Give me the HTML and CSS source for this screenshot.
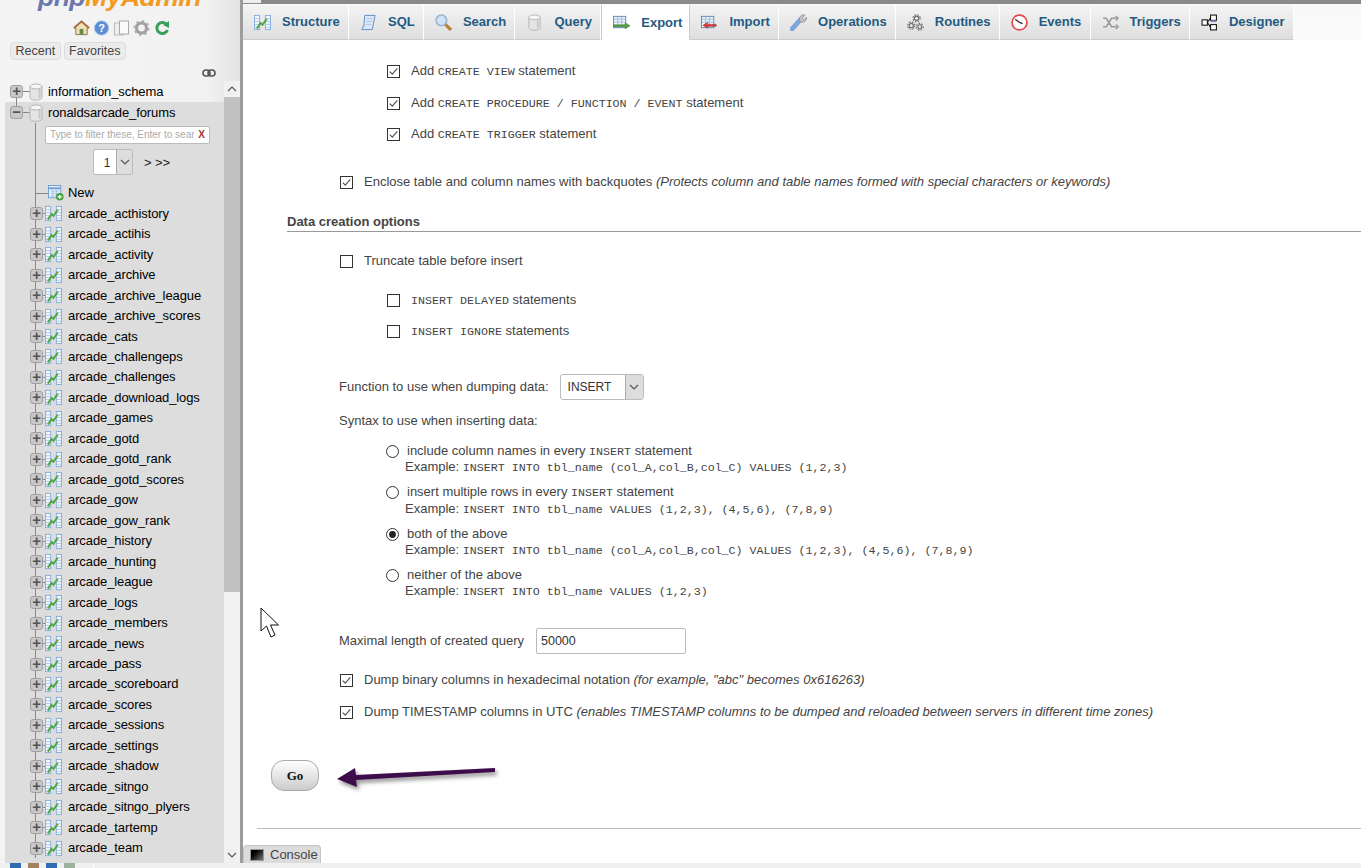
FILE: index.html
```html
<!DOCTYPE html>
<html lang="en">
<head>
<meta charset="utf-8">
<title>phpMyAdmin Export</title>
<link rel="stylesheet" href="styles.css">
</head>
<body>
<svg class="defs" width="0" height="0" aria-hidden="true">
  <defs>
    <symbol id="tbl" viewBox="0 0 18 18">
      <rect x="0.5" y="1.5" width="5.5" height="15" fill="#f3f8fe" stroke="#86aedd"/>
      <rect x="12" y="1.5" width="5.5" height="15" fill="#f3f8fe" stroke="#86aedd"/>
      <path d="M1 5h4.5M1 8h4.5M1 11h4.5M1 14h4.5M12.500 5h4.500M12.500 8h4.500M12.500 11h4.500M12.500 14h4.500" stroke="#a9c6e8"/>
      <path d="M3 15.500 L7 9.500 L9 11.500 L13.500 5" fill="none" stroke="#4ea53f" stroke-width="2"/>
    </symbol>
    <symbol id="db" viewBox="0 0 14 18">
      <path d="M1 3.500v11c0 1.500 2.600 2.700 6 2.700s6-1.200 6-2.700v-11z" fill="#e4e4e4" stroke="#b5b5b5"/>
      <ellipse cx="7" cy="3.500" rx="6" ry="2.500" fill="#f7f7f7" stroke="#b5b5b5"/>
      <rect x="9.500" y="6" width="2" height="9" fill="#c9c9c9"/>
    </symbol>
    <symbol id="newt" viewBox="0 0 17 17">
      <rect x="0.5" y="0.5" width="13" height="13" fill="#e8f0fa" stroke="#6f9bd1"/>
      <path d="M1 3.500h12" stroke="#6f9bd1" stroke-width="2"/>
      <path d="M3 6.500h9M3 9h9M3 11.500h9M5 5v8M9 5v8" stroke="#a9c4e4"/>
      <circle cx="12.500" cy="12.500" r="4" fill="#46a23c"/>
      <path d="M10.500 12.500h4M12.500 10.500v4" stroke="#fff" stroke-width="1.400"/>
    </symbol>
    <symbol id="chk" viewBox="0 0 13 13">
      <rect x="0.5" y="0.5" width="12" height="12" fill="#fff" stroke="#333"/>
      <path d="M2.800 6.600 L5.300 9.200 L10.300 3.400" fill="none" stroke="#555" stroke-width="1.200"/>
    </symbol>
    <symbol id="unchk" viewBox="0 0 13 13">
      <rect x="0.5" y="0.5" width="12" height="12" fill="#fff" stroke="#333"/>
    </symbol>
    <symbol id="rad" viewBox="0 0 13 13">
      <circle cx="6.500" cy="6.500" r="6" fill="#fff" stroke="#333"/>
    </symbol>
    <symbol id="radon" viewBox="0 0 13 13">
      <circle cx="6.500" cy="6.500" r="6" fill="#fff" stroke="#333"/>
      <circle cx="6.500" cy="6.500" r="3.400" fill="#222"/>
    </symbol>
    <symbol id="chev" viewBox="0 0 10 6">
      <path d="M1 1 L5 5 L9 1" fill="none" stroke="#555" stroke-width="1.200"/>
    </symbol>
  </defs>
</svg>

<div class="app">
  <aside class="side">
    <div class="logo"><span class="logo-text"><span class="logo-php">php</span><span class="logo-my">MyAdmin</span></span></div>
    <div class="quick">
      <svg class="qi" viewBox="0 0 18 16"><path d="M1 8 L9 1 L17 8 L15 8 L15 15 L3 15 L3 8 Z" fill="#efe0b8" stroke="#7c7a4a"/><path d="M1 8 L9 1 L17 8" fill="none" stroke="#a86a3a" stroke-width="2"/><rect x="7" y="9" width="4" height="6" fill="#6b8a4a"/></svg>
      <svg class="qi" viewBox="0 0 16 16"><circle cx="8" cy="8" r="7.200" fill="#5b8fd2" stroke="#b6cde9"/><text class="qi-help" x="8" y="12" text-anchor="middle">?</text></svg>
      <svg class="qi" viewBox="0 0 16 16"><rect x="1" y="3" width="9" height="12" fill="#eee" stroke="#bbb"/><rect x="6" y="1" width="9" height="13" fill="#fafafa" stroke="#aaa"/></svg>
      <svg class="qi" viewBox="0 0 16 16"><circle cx="8" cy="8" r="5" fill="none" stroke="#a2a2a2" stroke-width="3.200"/><circle cx="8" cy="8" r="7" fill="none" stroke="#adadad" stroke-width="2" stroke-dasharray="2.400 3.100"/></svg>
      <svg class="qi qi-sm" viewBox="0 0 14 16"><path d="M12 5 A5.500 5.500 0 1 0 12.500 10" fill="none" stroke="#3aa05a" stroke-width="3"/><path d="M8 5 L14 1 L14 8 Z" fill="#3aa05a"/></svg>
    </div>
    <div class="side-tabs">
      <span class="side-btn">Recent</span>
      <span class="side-btn">Favorites</span>
    </div>
    <div class="linkrow">
      <svg class="link-ico" viewBox="0 0 14 8"><rect x="1" y="1" width="7" height="6" rx="3" fill="none" stroke="#555" stroke-width="1.600"/><rect x="6" y="1" width="7" height="6" rx="3" fill="none" stroke="#555" stroke-width="1.600"/></svg>
    </div>
    <div class="nav">
      <div class="tree">
        <div class="db-row db-row-first">
          <span class="exp">+</span><span class="conn"></span><svg class="db-ico"><use href="#db"/></svg><span>information_schema</span>
        </div>
        <div class="db-open">
          <div class="db-row db-row-open">
            <span class="exp">&minus;</span><span class="conn"></span><svg class="db-ico"><use href="#db"/></svg><span>ronaldsarcade_forums</span>
          </div>
          <div class="kids">
            <div class="filter"><span class="filter-ph">Type to filter these, Enter to search all</span><span class="filter-x">X</span></div>
            <div class="pager">
              <span class="pg-sel"><span class="pg-val">1</span><span class="pg-btn"><svg class="chev"><use href="#chev"/></svg></span></span>
              <span class="pg-next">&gt; &gt;&gt;</span>
            </div>
            <div class="row row-new"><span class="conn-new"></span><svg class="new-ico"><use href="#newt"/></svg><span>New</span></div>
            <div class="row"><span class="exp">+</span><span class="conn-s"></span><svg class="t-ico"><use href="#tbl"/></svg><span>arcade_acthistory</span></div>
            <div class="row"><span class="exp">+</span><span class="conn-s"></span><svg class="t-ico"><use href="#tbl"/></svg><span>arcade_actihis</span></div>
            <div class="row"><span class="exp">+</span><span class="conn-s"></span><svg class="t-ico"><use href="#tbl"/></svg><span>arcade_activity</span></div>
            <div class="row"><span class="exp">+</span><span class="conn-s"></span><svg class="t-ico"><use href="#tbl"/></svg><span>arcade_archive</span></div>
            <div class="row"><span class="exp">+</span><span class="conn-s"></span><svg class="t-ico"><use href="#tbl"/></svg><span>arcade_archive_league</span></div>
            <div class="row"><span class="exp">+</span><span class="conn-s"></span><svg class="t-ico"><use href="#tbl"/></svg><span>arcade_archive_scores</span></div>
            <div class="row"><span class="exp">+</span><span class="conn-s"></span><svg class="t-ico"><use href="#tbl"/></svg><span>arcade_cats</span></div>
            <div class="row"><span class="exp">+</span><span class="conn-s"></span><svg class="t-ico"><use href="#tbl"/></svg><span>arcade_challengeps</span></div>
            <div class="row"><span class="exp">+</span><span class="conn-s"></span><svg class="t-ico"><use href="#tbl"/></svg><span>arcade_challenges</span></div>
            <div class="row"><span class="exp">+</span><span class="conn-s"></span><svg class="t-ico"><use href="#tbl"/></svg><span>arcade_download_logs</span></div>
            <div class="row"><span class="exp">+</span><span class="conn-s"></span><svg class="t-ico"><use href="#tbl"/></svg><span>arcade_games</span></div>
            <div class="row"><span class="exp">+</span><span class="conn-s"></span><svg class="t-ico"><use href="#tbl"/></svg><span>arcade_gotd</span></div>
            <div class="row"><span class="exp">+</span><span class="conn-s"></span><svg class="t-ico"><use href="#tbl"/></svg><span>arcade_gotd_rank</span></div>
            <div class="row"><span class="exp">+</span><span class="conn-s"></span><svg class="t-ico"><use href="#tbl"/></svg><span>arcade_gotd_scores</span></div>
            <div class="row"><span class="exp">+</span><span class="conn-s"></span><svg class="t-ico"><use href="#tbl"/></svg><span>arcade_gow</span></div>
            <div class="row"><span class="exp">+</span><span class="conn-s"></span><svg class="t-ico"><use href="#tbl"/></svg><span>arcade_gow_rank</span></div>
            <div class="row"><span class="exp">+</span><span class="conn-s"></span><svg class="t-ico"><use href="#tbl"/></svg><span>arcade_history</span></div>
            <div class="row"><span class="exp">+</span><span class="conn-s"></span><svg class="t-ico"><use href="#tbl"/></svg><span>arcade_hunting</span></div>
            <div class="row"><span class="exp">+</span><span class="conn-s"></span><svg class="t-ico"><use href="#tbl"/></svg><span>arcade_league</span></div>
            <div class="row"><span class="exp">+</span><span class="conn-s"></span><svg class="t-ico"><use href="#tbl"/></svg><span>arcade_logs</span></div>
            <div class="row"><span class="exp">+</span><span class="conn-s"></span><svg class="t-ico"><use href="#tbl"/></svg><span>arcade_members</span></div>
            <div class="row"><span class="exp">+</span><span class="conn-s"></span><svg class="t-ico"><use href="#tbl"/></svg><span>arcade_news</span></div>
            <div class="row"><span class="exp">+</span><span class="conn-s"></span><svg class="t-ico"><use href="#tbl"/></svg><span>arcade_pass</span></div>
            <div class="row"><span class="exp">+</span><span class="conn-s"></span><svg class="t-ico"><use href="#tbl"/></svg><span>arcade_scoreboard</span></div>
            <div class="row"><span class="exp">+</span><span class="conn-s"></span><svg class="t-ico"><use href="#tbl"/></svg><span>arcade_scores</span></div>
            <div class="row"><span class="exp">+</span><span class="conn-s"></span><svg class="t-ico"><use href="#tbl"/></svg><span>arcade_sessions</span></div>
            <div class="row"><span class="exp">+</span><span class="conn-s"></span><svg class="t-ico"><use href="#tbl"/></svg><span>arcade_settings</span></div>
            <div class="row"><span class="exp">+</span><span class="conn-s"></span><svg class="t-ico"><use href="#tbl"/></svg><span>arcade_shadow</span></div>
            <div class="row"><span class="exp">+</span><span class="conn-s"></span><svg class="t-ico"><use href="#tbl"/></svg><span>arcade_sitngo</span></div>
            <div class="row"><span class="exp">+</span><span class="conn-s"></span><svg class="t-ico"><use href="#tbl"/></svg><span>arcade_sitngo_plyers</span></div>
            <div class="row"><span class="exp">+</span><span class="conn-s"></span><svg class="t-ico"><use href="#tbl"/></svg><span>arcade_tartemp</span></div>
            <div class="row"><span class="exp">+</span><span class="conn-s"></span><svg class="t-ico"><use href="#tbl"/></svg><span>arcade_team</span></div>
          </div>
        </div>
      </div>
      <div class="sbar">
        <div class="sb-btn"><svg class="chev chev-up"><use href="#chev"/></svg></div>
        <div class="sb-thumb"></div>
        <div class="sb-track"></div>
        <div class="sb-btn"><svg class="chev"><use href="#chev"/></svg></div>
      </div>
    </div>
  </aside>
  <div class="split"></div>
  <main class="main">
    <div class="topbar"><span class="crumb"></span></div>
    <nav class="tabs">
      <a class="tab"><svg class="tab-ico"><use href="#tbl"/></svg>Structure</a>
      <a class="tab"><svg class="tab-ico" viewBox="0 0 16 18"><path d="M4 1.500h11l-3 15H1l1-3h1z" fill="#dbe8f8" stroke="#5c8cc8"/><path d="M6 5h6M5.500 8h6M5 11h6" stroke="#a9c4e4"/></svg>SQL</a>
      <a class="tab"><svg class="tab-ico" viewBox="0 0 16 16"><path d="M9.500 9.500 L15 15" stroke="#b8803a" stroke-width="3"/><circle cx="6" cy="6" r="5" fill="#cfe3f7" stroke="#9ab4cf" stroke-width="1.500"/></svg>Search</a>
      <a class="tab"><svg class="tab-ico"><use href="#db"/></svg>Query</a>
      <a class="tab tab-on"><svg class="tab-ico" viewBox="0 0 18 16"><rect x="0.5" y="1.500" width="13" height="12" fill="#eef4fb" stroke="#5f86b8"/><path d="M1 4.500h12M1 7.500h12M5 2v11M9 2v11" stroke="#9dbce0"/><path d="M1 10.500h12l0-2 5 3-5 3 0-2H1z" fill="#58a83f" stroke="#35752a" stroke-width=".6"/></svg>Export</a>
      <a class="tab"><svg class="tab-ico" viewBox="0 0 18 16"><rect x="0.5" y="1.500" width="13" height="12" fill="#eef4fb" stroke="#5f86b8"/><path d="M1 4.500h12M1 7.500h12M5 2v11M9 2v11" stroke="#9dbce0"/><path d="M16 10h-9l0-2-5 3 5 3 0-2h9z" fill="#e23b3b" stroke="#a52020" stroke-width=".6"/></svg>Import</a>
      <a class="tab"><svg class="tab-ico" viewBox="0 0 16 16"><path d="M2 14 L10 5" stroke="#7ea6dc" stroke-width="4.500" stroke-linecap="round"/><path d="M9 6 A4 4 0 0 1 14 1 L11.500 4 L13 5.500 L15.500 3 A4 4 0 0 1 10 7.500 Z" fill="#c5c5c5" stroke="#8c8c8c" stroke-width=".7"/></svg>Operations</a>
      <a class="tab"><svg class="tab-ico" viewBox="0 0 16 16"><g fill="none" stroke="#666"><circle cx="9" cy="4" r="2"/><circle cx="9" cy="4" r="3.400" stroke-dasharray="1.500 1.200"/><circle cx="4" cy="11" r="2"/><circle cx="4" cy="11" r="3.400" stroke-dasharray="1.500 1.200"/><circle cx="12" cy="12" r="1.800"/><circle cx="12" cy="12" r="3.200" stroke-dasharray="1.500 1.200"/></g></svg>Routines</a>
      <a class="tab"><svg class="tab-ico" viewBox="0 0 16 16"><circle cx="8" cy="8" r="7" fill="#fff" stroke="#e5484d" stroke-width="1.600"/><path d="M4 5 L8 8 L11 9" fill="none" stroke="#333" stroke-width="1.300"/></svg>Events</a>
      <a class="tab"><svg class="tab-ico" viewBox="0 0 16 14"><path d="M1 3h3l5 8h4M1 11h3l5-8h4M13 1l2 2-2 2M13 9l2 2-2 2" fill="none" stroke="#999" stroke-width="1.500"/></svg>Triggers</a>
      <a class="tab"><svg class="tab-ico" viewBox="0 0 16 16"><rect x="1" y="5.500" width="5" height="5" fill="#fff" stroke="#111"/><rect x="9" y="1" width="5.500" height="5" fill="#fff" stroke="#111"/><rect x="9" y="10" width="5.500" height="5" fill="#fff" stroke="#111"/><path d="M6 8 L9 3.500M6 8 L9 12.500" stroke="#111"/><rect x="9" y="6" width="5.500" height="1.600" fill="#8a8ac8"/></svg>Designer</a>
    </nav>
    <section class="content">
      <div class="opt lvl2"><svg class="box"><use href="#chk"/></svg><span>Add <code>CREATE VIEW</code> statement</span></div>
      <div class="opt lvl2"><svg class="box"><use href="#chk"/></svg><span>Add <code>CREATE PROCEDURE / FUNCTION / EVENT</code> statement</span></div>
      <div class="opt lvl2"><svg class="box"><use href="#chk"/></svg><span>Add <code>CREATE TRIGGER</code> statement</span></div>
      <div class="opt-l lvl1 gap-enclose"><svg class="box"><use href="#chk"/></svg><span>Enclose table and column names with backquotes <em>(Protects column and table names formed with special characters or keywords)</em></span></div>
      <h3 class="subhead">Data creation options</h3>
      <div class="opt-l lvl1 gap-trunc"><svg class="box"><use href="#unchk"/></svg><span>Truncate table before insert</span></div>
      <div class="opt lvl2 gap-delayed"><svg class="box"><use href="#unchk"/></svg><span><code>INSERT DELAYED</code> statements</span></div>
      <div class="opt lvl2"><svg class="box"><use href="#unchk"/></svg><span><code>INSERT IGNORE</code> statements</span></div>
      <div class="func">
        <span>Function to use when dumping data:</span>
        <span class="sel"><span class="sel-val">INSERT</span><span class="sel-btn"><svg class="chev"><use href="#chev"/></svg></span></span>
      </div>
      <div class="syntax">Syntax to use when inserting data:</div>
      <div class="choices">
        <div class="choice">
          <div class="choice-top"><svg class="box"><use href="#rad"/></svg><span>include column names in every <code>INSERT</code> statement</span></div>
          <div class="example">Example: <code>INSERT INTO tbl_name (col_A,col_B,col_C) VALUES (1,2,3)</code></div>
        </div>
        <div class="choice">
          <div class="choice-top"><svg class="box"><use href="#rad"/></svg><span>insert multiple rows in every <code>INSERT</code> statement</span></div>
          <div class="example">Example: <code>INSERT INTO tbl_name VALUES (1,2,3), (4,5,6), (7,8,9)</code></div>
        </div>
        <div class="choice">
          <div class="choice-top"><svg class="box"><use href="#radon"/></svg><span>both of the above</span></div>
          <div class="example">Example: <code>INSERT INTO tbl_name (col_A,col_B,col_C) VALUES (1,2,3), (4,5,6), (7,8,9)</code></div>
        </div>
        <div class="choice">
          <div class="choice-top"><svg class="box"><use href="#rad"/></svg><span>neither of the above</span></div>
          <div class="example">Example: <code>INSERT INTO tbl_name VALUES (1,2,3)</code></div>
        </div>
      </div>
      <div class="maxlen">
        <span>Maximal length of created query</span>
        <span class="num-input">50000</span>
      </div>
      <div class="opt-l lvl1 gap-dump"><svg class="box"><use href="#chk"/></svg><span>Dump binary columns in hexadecimal notation <em>(for example, "abc" becomes 0x616263)</em></span></div>
      <div class="opt-l lvl1"><svg class="box"><use href="#chk"/></svg><span>Dump TIMESTAMP columns in UTC <em>(enables TIMESTAMP columns to be dumped and reloaded between servers in different time zones)</em></span></div>
      <button class="go" type="button">Go</button>
      <hr class="rule">
    </section>
    <div class="console-bar">
      <span class="console"><span class="console-ico"></span>Console</span>
    </div>
  </main>
</div>
<footer class="strip">
  <div class="strip-icons"><i class="si si-a"></i><i class="si si-b"></i><i class="si si-a"></i><i class="si si-c"></i></div>
</footer>

<svg class="annot-arrow" viewBox="0 0 175 35" aria-hidden="true">
  <defs><filter id="shd" x="-10%" y="-50%" width="120%" height="220%"><feDropShadow dx="2" dy="3" stdDeviation="2" flood-color="#000" flood-opacity=".45"/></filter></defs>
  <path d="M2 15 L20 4 L21 11 L160 4 L160 8 L21 16 L22 23 Z" fill="#3d0b4b" filter="url(#shd)"/>
</svg>
<svg class="annot-cursor" viewBox="0 0 20 32" aria-hidden="true">
  <path d="M1 1 L1 24 L6.500 19 L11 30 L15 28 L10.500 18 L18.500 18 Z" fill="#fff" stroke="#111" stroke-width="1"/>
</svg>
</body>
</html>
```
FILE: styles.css
```css
* { box-sizing: border-box; }
html, body { margin: 0; height: 868px; overflow: hidden; background: #fff; }
body { font: 13px/16px "Liberation Sans", Arial, sans-serif; color: #444; position: relative; }
.defs { position: absolute; }
svg { display: block; flex: none; }

.app { display: flex; height: 863px; }

/* sidebar */
.side { width: 240px; flex: none; background: linear-gradient(90deg, #f4f4f4 0, #f2f2f2 85%, #e4e4e4 100%); display: flex; flex-direction: column; overflow: hidden; color: #000; }
.logo { height: 20px; overflow: hidden; padding-left: 38px; }
.logo-text { display: block; margin-top: -19px; font: italic bold 26.5px/32px "Liberation Sans", Arial, sans-serif; white-space: nowrap; letter-spacing: -0.5px; }
.logo-php { color: #6c78ae; }
.logo-my { color: #f29a1f; }
.quick { height: 16px; display: flex; gap: 3px; padding-left: 73px; align-items: center; }
.qi { width: 17px; height: 16px; }
.qi-sm { width: 14px; margin-left: 2px; }
.qi-help { font: bold 11px "Liberation Sans", Arial, sans-serif; fill: #fff; }
.side-tabs { display: flex; gap: 3px; padding: 6px 0 0 10px; height: 29px; color: #444; font-size: 12.5px; }
.side-btn { height: 18px; line-height: 16px; padding: 0 4.5px; background: #ececec; border: 1px solid #ddd; border-radius: 4px; }
.linkrow { height: 16px; padding: 0 0 0 202px; display: flex; align-items: center; }
.link-ico { width: 14px; height: 8px; }
.nav { flex: 1; min-height: 0; display: flex; }
.tree { width: 219px; margin-left: 5px; overflow: hidden; letter-spacing: -0.1px; }
.db-row { height: 21px; display: flex; align-items: center; padding-left: 5px; }
.db-row-first { position: relative; }
.db-row-first::after { content: ""; position: absolute; left: 11px; top: 16px; width: 1px; height: 10px; background: #888; }
.db-open { background: #dddddd; height: 780px; }
.exp { width: 13px; height: 13px; flex: none; border: 1px solid #a0a0a0; border-radius: 3px; background: #c8c8c8; color: #555; font: bold 15px/10px "Liberation Sans", Arial, sans-serif; text-align: center; position: relative; z-index: 1; }
.conn { width: 8px; height: 1px; background: #888; flex: none; }
.db-ico { width: 14px; height: 18px; margin: 0 5px 0 -2px; }
.kids { margin-left: 30px; border-left: 1px solid #888; }
.filter { margin: 0 0 0 9px; position: relative; top: 3px; width: 165px; height: 18px; background: #fff; border: 1px solid #bbb; border-radius: 2px; display: flex; align-items: center; padding: 0 4px; font-size: 10px; overflow: hidden; letter-spacing: 0; }
.filter-ph { color: #aaa; flex: 1; white-space: nowrap; overflow: hidden; }
.filter-x { color: #a33; font-weight: bold; margin-left: 4px; font-size: 10px; }
.pager { display: flex; align-items: center; margin: 8px 0 0 57px; height: 26px; }
.pg-sel { display: flex; width: 40px; height: 26px; border: 1px solid #bbb; border-radius: 2px; background: #fff; }
.pg-val { flex: 1; text-align: center; line-height: 26px; padding-left: 4px; color: #333; font-size: 12px; }
.pg-btn { width: 16px; background: #ddd; border-left: 1px solid #aaa; display: flex; align-items: center; justify-content: center; }
.pg-next { margin-left: 11px; color: #222; position: relative; top: 1px; }
.chev { width: 10px; height: 6px; }
.chev-up { transform: rotate(180deg); }
.row { height: 20.47px; display: flex; align-items: center; margin-left: -6px; white-space: nowrap; }
.row-new { margin-left: 0; margin-top: 8px; }
.conn-new { width: 12px; height: 1px; background: #888; flex: none; }
.new-ico { width: 16px; height: 16px; margin-right: 4px; }
.conn-s { width: 2px; height: 1px; background: #888; flex: none; }
.t-ico { width: 17px; height: 17px; margin-right: 6px; }

.sbar { width: 16px; flex: none; display: flex; flex-direction: column; }
.sb-btn { height: 16px; flex: none; background: #f1f1f1; display: flex; align-items: center; justify-content: center; }
.sb-thumb { height: 495px; flex: none; background: #c1c1c1; }
.sb-track { flex: 1; background: #f1f1f1; }

.split { width: 3px; flex: none; background: #9c9c9c; }

/* main */
.main { flex: 1; min-width: 0; display: flex; flex-direction: column; }
.topbar { height: 4px; background: #8a8a8a; flex: none; }
.crumb { display: block; width: 18px; height: 3px; background: #eee; }
.tabs { height: 36px; flex: none; display: flex; background: linear-gradient(#f8f8f8, #fbfbfb); align-items: stretch; padding-top: 1px; }
.tab { display: flex; align-items: center; padding: 0 8.2px 0 11px; background: linear-gradient(#f4f4f4, #dedede); border-right: 1px solid #fff; border-bottom: 1px solid #ccc; color: #235a81; font-weight: bold; white-space: nowrap; }
.tab-on { background: #fff; border-bottom: 0; border-left: 1px solid #ccc; border-right: 1px solid #ccc; color: #235a81; padding-right: 7px; }
.tab-ico { width: 17px; height: 17px; margin-right: 11px; }

.content { flex: 1; min-height: 0; padding-top: 16px; overflow: hidden; }
code { font: 11.67px/16px "Liberation Mono", "Courier New", monospace; }
.opt { height: 31.5px; display: flex; align-items: center; gap: 11px; }
.opt-l { height: 32px; display: flex; align-items: center; gap: 11px; white-space: nowrap; }
.lvl2 { padding-left: 144px; }
.lvl1 { padding-left: 97px; }
.box { width: 13px; height: 13px; }
.gap-enclose { margin-top: 15.5px; }
.gap-trunc { margin-top: 13px; }
.gap-delayed { margin-top: 7.25px; }
.gap-dump { margin-top: 10px; }
.subhead { margin: 14px 0 0 44px; height: 20px; font-size: 13px; line-height: 19px; font-weight: bold; color: #444; border-bottom: 1px solid #999; }
.func { margin: 26.25px 0 0 96px; height: 26px; display: flex; align-items: center; gap: 11px; }
.sel { width: 84px; height: 26px; display: flex; border: 1px solid #bbb; border-radius: 3px; background: #fff; color: #333; font-size: 12px; }
.sel-val { flex: 1; line-height: 24px; padding-left: 7px; }
.sel-btn { width: 18px; background: #ddd; border-left: 1px solid #aaa; display: flex; align-items: center; justify-content: center; }
.syntax { margin: 11px 0 0 96px; height: 20px; line-height: 20px; }
.choices { margin: 11.25px 0 0 143px; }
.choice { height: 41.33px; padding-top: 1px; }
.choice-top { display: flex; align-items: center; gap: 8px; height: 17.5px; margin-bottom: -2px; white-space: nowrap; }
.example { margin-left: 19px; height: 17.5px; line-height: 17.5px; white-space: nowrap; }
.maxlen { margin: 21.4px 0 0 96px; height: 26px; display: flex; align-items: center; gap: 12px; }
.num-input { width: 150px; height: 26px; border: 1px solid #bbb; border-radius: 2px; line-height: 24px; padding-left: 4px; color: #333; font-size: 12.5px; }
.go { display: block; margin: 32px 0 0 28px; width: 48px; height: 31px; padding: 0; border: 1px solid #aaa; border-radius: 13px; background: linear-gradient(#fff, #ccc); font: bold 13px "Liberation Serif", "Times New Roman", serif; color: #111; }
.rule { margin: 37px 0 0 14px; border: 0; border-top: 1px solid #bbb; height: 0; }

.console-bar { height: 18px; flex: none; background: #fff; }
.console { display: inline-flex; align-items: center; gap: 6px; width: 78px; height: 18px; padding-left: 6px; background: #dcdcdc; border: 1px solid #c4c4c4; border-bottom: 0; border-radius: 4px 4px 0 0; color: #444; }
.console-ico { width: 14px; height: 12px; background: linear-gradient(135deg, #000 30%, #777); border: 1px solid #999; }

/* bottom strip */
.strip { height: 5px; background: #f0f0f0; overflow: hidden; }
.strip-icons { width: 94px; height: 5px; border-right: 1px solid #fff; display: flex; gap: 7px; padding-left: 10px; }
.si { display: block; width: 11px; height: 5px; }
.si-a { background: #2f6cb0; }
.si-b { background: #a5825f; }
.si-c { background: #9ab39a; }

/* things drawn over the page */
.annot-arrow { position: absolute; left: 335px; top: 764px; width: 175px; height: 35px; }
.annot-cursor { position: absolute; left: 260px; top: 607px; width: 20px; height: 32px; }
```
